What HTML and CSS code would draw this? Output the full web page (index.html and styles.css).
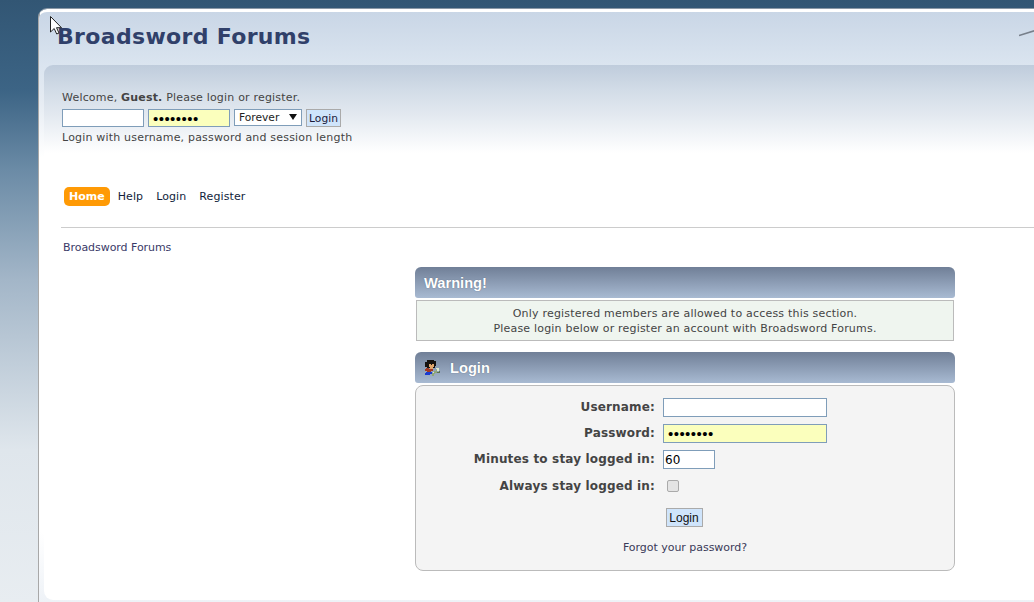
FILE: index.html
```html
<!DOCTYPE html>
<html lang="en">
<head>
<meta charset="utf-8">
<title>Broadsword Forums</title>
<link rel="stylesheet" href="styles.css">
</head>
<body>
<div class="page">
  <div class="logo-bar">
    <h1 class="site-title">Broadsword Forums</h1>
  </div>
  <div class="panel">
    <div class="welcome">
      <p class="welcome-line">Welcome, <b>Guest.</b> Please <a href="#">login</a> or <a href="#">register</a>.</p>
      <form class="quick-login">
        <input class="field field-top" type="text">
        <input class="field field-top field-filled field-pass" type="password" value="password">
        <span class="select-box">Forever<span class="arrow"></span></span>
        <button class="btn" type="button">Login</button>
      </form>
      <p class="welcome-hint">Login with username, password and session length</p>
    </div>
    <nav class="nav">
      <a class="nav-home" href="#">Home</a>
      <a href="#">Help</a>
      <a href="#">Login</a>
      <a href="#">Register</a>
    </nav>
    <hr class="rule">
    <a class="crumb" href="#">Broadsword Forums</a>
    <main class="content">
      <h2 class="cat-head">Warning!</h2>
      <div class="notice">Only registered members are allowed to access this section.<br>Please login below or register an account with Broadsword Forums.</div>
      <h2 class="cat-head cat-login">
        <svg class="user-icon" viewBox="0 0 16 16" width="16" height="16" shape-rendering="crispEdges" aria-hidden="true">
          <path fill="#17120e" d="M3 0h7v1h2v5h-1v2H5v1H3V7H1V2h2z"/>
          <path fill="#e0a66c" d="M5 4h2v1h1V4h2v3H9v2H6V7H5z"/>
          <path fill="#a33a22" d="M2 8h3v1h4v2H7v1H3v-1H1V9h1z"/>
          <path fill="#1b3bd0" d="M2 12h6v2H6v1H1v-2h1z"/>
          <path fill="#8fa678" d="M8 13h2v-2h2v-1h1v3h-2v1h-1v2H8z"/>
          <path fill="#dfeac8" d="M12 8h3v3h-2v-2h-1zM9 12h1v1H9z"/>
          <path fill="#5d7350" d="M15 11h1v2h-3v-1h2z"/>
        </svg>
        Login
      </h2>
      <form class="login-box">
        <div class="login-grid">
          <label class="lbl">Username:</label><input class="field field-long" type="text">
          <label class="lbl">Password:</label><input class="field field-long field-filled field-pass" type="password" value="password">
          <label class="lbl">Minutes to stay logged in:</label><input class="field field-short" type="text" value="60">
          <label class="lbl lbl-check">Always stay logged in:</label><span class="check"></span>
        </div>
        <div class="submit-row"><button class="btn btn-main" type="button">Login</button></div>
        <a class="forgot" href="#">Forgot your password?</a>
      </form>
    </main>
  </div>
  <svg class="logo-stroke" width="16" height="10" viewBox="0 0 16 10" aria-hidden="true"><path d="M0 7.500L16 2.500" stroke="#777f8a" stroke-width="1.600"/></svg>
</div>
<svg class="cursor" width="14" height="20" viewBox="0 0 14 20" aria-hidden="true"><path d="M.5.500V16l3.700-3.500 2.500 5.500 2.300-1-2.500-5.300h5z" fill="#fff" stroke="#222" stroke-width="1"/></svg>
</body>
</html>
```

FILE: styles.css
```css
* { box-sizing: border-box; }
html, body { height: 100%; }
body {
  margin: 0;
  height: 602px;
  overflow: hidden;
  padding: 9px 0 0 38px;
  background: linear-gradient(#325674 0, #3c6485 90px, #6b8ba6 170px, #a3b6c8 280px, #dfe6ec 450px, #e8edf1 602px);
  font-family: "DejaVu Sans", sans-serif;
  font-size: 11px;
  color: #444;
  position: relative;
}
a { color: inherit; text-decoration: none; }
.page {
  position: relative;
  width: 996px;
  height: 593px;
  padding: 1px 0 0 5px;
  border-left: 1px solid #a8a8a8;
  border-top: 3px solid #fff;
  border-radius: 9px 0 0 0;
  background: linear-gradient(#c9d6e6 0, #dbe5f0 55px, #e6ecf3 90px, #fff 145px, #fff 520px, #eef2f7 590px);
  box-shadow: 0 -1px 0 #8a98a6;
}
.logo-bar { height: 52px; padding: 9px 0 0 13px; }
.site-title {
  margin: 0;
  font-size: 22px;
  line-height: 30px;
  font-weight: bold;
  letter-spacing: .33px;
  color: #30406a;
}
.panel {
  height: 535px;
  padding: 0 0 0 18px;
  border-radius: 9px 0 0 9px;
  background: linear-gradient(#bfccdc 0, #d2dce7 25px, #e3e9f0 50px, #fff 88px, #fff 100%);
}
.welcome { padding-top: 26px; }
.welcome-line, .welcome-hint { margin: 0; line-height: 14px; letter-spacing: .19px; }
.quick-login { display: flex; align-items: flex-start; gap: 4px; margin: 4px 0; }
.field {
  display: block;
  height: 18px;
  padding: 1px 4px;
  border: 1px solid #7f9db9;
  border-radius: 0;
  background: #fff;
  font: 11px "DejaVu Sans", sans-serif;
  color: #000;
  outline: 0;
}
.field-top { width: 82px; }
.field-filled { background: #fbffbd; }
.field-pass { font: 15px "Liberation Sans", sans-serif; letter-spacing: .45px; }
.select-box {
  display: flex;
  align-items: center;
  position: relative;
  width: 68px;
  height: 17px;
  padding-left: 4px;
  border: 1px solid #7f9db9;
  background: #fff;
  color: #222;
  font-size: 10.700px;
}
.arrow {
  position: absolute;
  right: 4px;
  top: 4px;
  border: 4px solid transparent;
  border-top: 6px solid #111;
  border-bottom: 0;
}
.btn {
  width: 35px;
  height: 18px;
  padding: 0;
  border: 1px solid #aaa;
  border-radius: 0;
  background: #cfe4fb;
  font: 10.700px "DejaVu Sans", sans-serif;
  color: #1a1a3a;
}
.nav { display: flex; align-items: center; gap: 13px; margin: 42px 0 0 2px; color: #111e3c; letter-spacing: .1px; }
.nav-home {
  height: 19px;
  margin-right: -5px;
  padding: 0 5px;
  border-radius: 5px;
  background: #ff9a05;
  color: #fff;
  font-weight: bold;
  line-height: 19px;
  letter-spacing: 0;
}
.rule { height: 1px; margin: 21px 0 0 -1px; border: 0; background: #ccc; }
.crumb { display: block; margin: 13px 0 0 1px; line-height: 14px; letter-spacing: -.05px; color: #3a3a68; }
.content { width: 540px; margin: 12px 0 0 353px; }
.cat-head {
  height: 31px;
  margin: 0;
  padding: 1px 0 0 9px;
  border-radius: 6px 6px 3px 3px;
  background: linear-gradient(#707f97, #a8bad2);
  font: bold 14.670px/31px "Liberation Sans", sans-serif;
  color: #fff;
  text-shadow: 0 0 1px #4c5c74;
}
.notice {
  height: 41px;
  margin: 2px 1px 0 1px;
  padding-top: 5px;
  border: 1px solid #bbb;
  background: #eff5ef;
  line-height: 15px;
  text-align: center;
  letter-spacing: .2px;
}
.cat-login { display: flex; align-items: center; gap: 10px; margin-top: 11px; }
.user-icon { flex: none; }
.login-box {
  height: 186px;
  margin-top: 2px;
  padding-top: 12px;
  border: 1px solid #bbb;
  border-radius: 8px;
  background: #f4f4f4;
  text-align: center;
}
.login-grid {
  display: grid;
  grid-template-columns: 239px auto;
  column-gap: 8px;
  row-gap: 7px;
  justify-items: start;
  align-items: center;
}
.lbl { justify-self: end; margin-bottom: 2px; font-weight: bold; font-size: 12px; letter-spacing: .16px; color: #444; }
.field-long { width: 164px; height: 19px; }
.field-short { width: 52px; height: 19px; padding-left: 1px; font-size: 12px; }
.lbl-check { margin: 3px 0 0; }
.check {
  width: 12px;
  height: 12px;
  margin: 3px 0 0 4px;
  border: 1px solid #aaa;
  border-radius: 2px;
  background: #e4e4e4;
}
.submit-row { margin: 15px 2px 0 0; }
.btn-main { width: 37px; height: 19px; padding: 0; font: 12px "Liberation Sans", sans-serif; color: #111; }
.forgot { display: block; margin-top: 14px; line-height: 14px; color: #3a3a58; letter-spacing: -.03px; }
.logo-stroke { position: absolute; left: 980px; top: 16px; }
.cursor { position: absolute; left: 50px; top: 16px; }
```
